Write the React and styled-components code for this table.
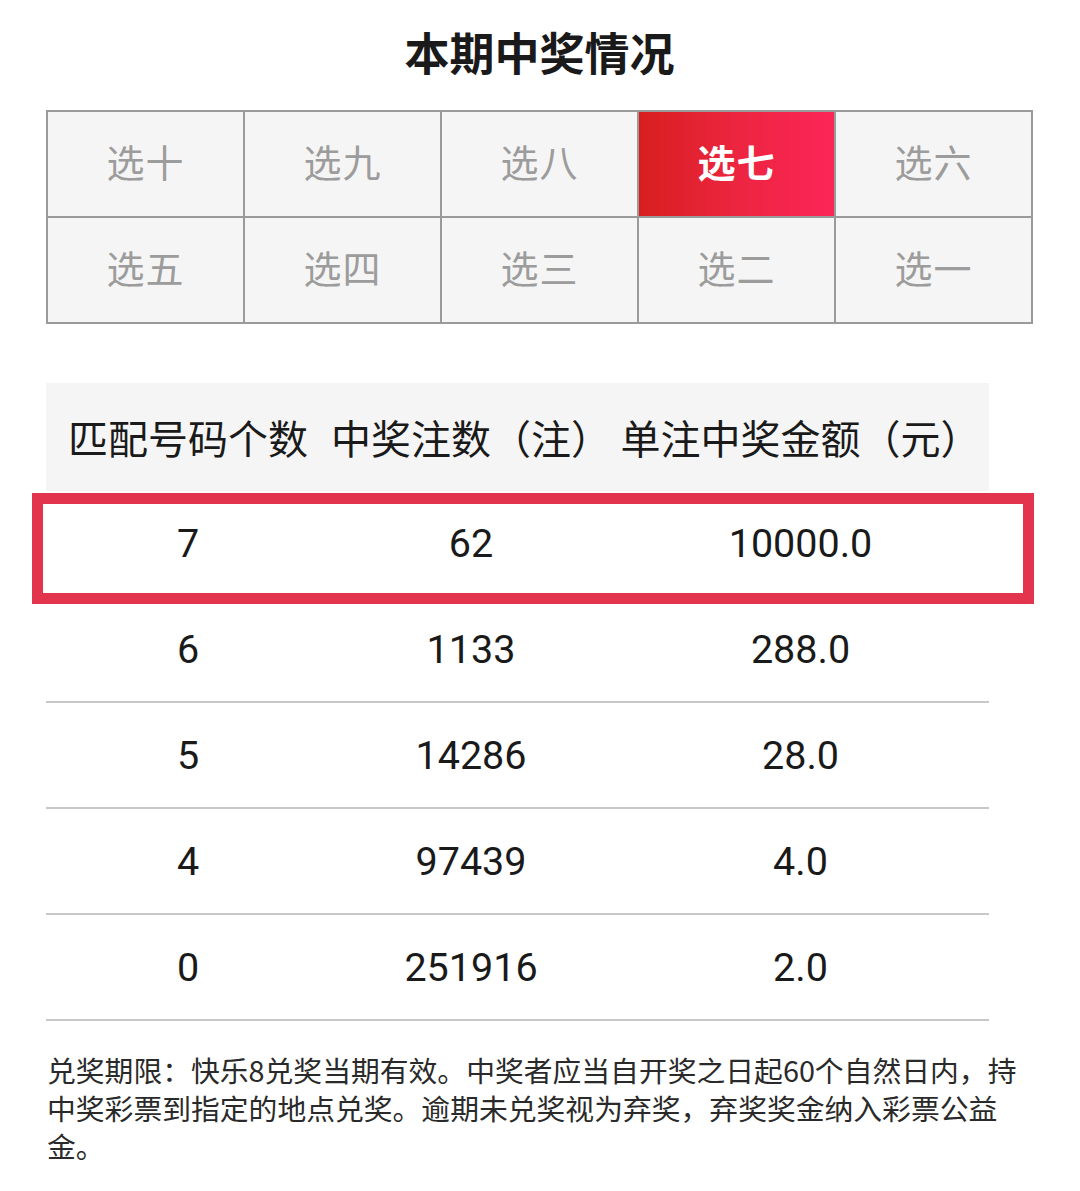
import React from "react";
import styled, { createGlobalStyle, css } from "styled-components";

const Global = createGlobalStyle`
  html, body { margin: 0; padding: 0; background: #ffffff; }
  body { font-family: "Noto Sans CJK SC", "Noto Sans", sans-serif; color: #1a1a1a; }
  * { box-sizing: border-box; }
`;

const Page = styled.div`
  width: 1080px;
  padding: 20px 0 40px 46px;
`;

const Title = styled.h1`
  margin: 0;
  width: 987px;
  text-align: center;
  font-size: 45px;
  line-height: 64px;
  font-weight: 700;
  color: #1a1a1a;
`;

const Tabs = styled.div`
  margin-top: 26px;
  width: 987px;
  display: grid;
  grid-template-columns: repeat(5, 1fr);
  grid-auto-rows: 106px;
  border-top: 2px solid #9a9a9a;
  border-left: 2px solid #9a9a9a;
`;

const Tab = styled.div`
  display: flex;
  align-items: center;
  justify-content: center;
  padding-bottom: 8px;
  border-right: 2px solid #9a9a9a;
  border-bottom: 2px solid #9a9a9a;
  background: #f5f5f5;
  color: #9c9c9c;
  font-size: 38px;
  letter-spacing: 1px;
  ${(p) =>
    p.$active &&
    css`
      background: linear-gradient(90deg, #d81f1f 0%, #ec2540 50%, #fc2558 100%);
      color: #ffffff;
      font-weight: 700;
    `}
`;

const Table = styled.div`
  margin-top: 59px;
  width: 943px;
`;

const Row = styled.div`
  position: relative;
  display: grid;
  grid-template-columns: 284px 282px 1fr;
  align-items: center;
  height: ${(p) => (p.$header ? "108px" : "106px")};
  background: ${(p) => (p.$header ? "#f5f5f5" : "#ffffff")};
  border-bottom: ${(p) => (p.$header ? "none" : "2px solid #c8c8c8")};
`;

const HeadCell = styled.div`
  text-align: center;
  font-size: 40px;
  color: #1a1a1a;
  white-space: nowrap;
`;

const Cell = styled.div`
  text-align: center;
  font-family: Roboto, "Noto Sans", sans-serif;
  font-size: 39.5px;
  color: #1a1a1a;
`;

const Highlight = styled.div`
  position: absolute;
  z-index: 2;
  top: 2px;
  left: -14px;
  right: -45px;
  bottom: -9px;
  border: 11px solid #e2344c;
  pointer-events: none;
`;

const Note = styled.p`
  margin: 30px 0 0 1px;
  width: 972px;
  font-size: 28.8px;
  line-height: 38px;
  color: #2a2a2a;
`;

const tabs = ["选十", "选九", "选八", "选七", "选六", "选五", "选四", "选三", "选二", "选一"];

const rows = [
  ["7", "62", "10000.0"],
  ["6", "1133", "288.0"],
  ["5", "14286", "28.0"],
  ["4", "97439", "4.0"],
  ["0", "251916", "2.0"],
];

export default function App() {
  return (
    <>
      <Global />
      <Page>
        <Title>本期中奖情况</Title>
        <Tabs>
          {tabs.map((t) => (
            <Tab key={t} $active={t === "选七"}>
              {t}
            </Tab>
          ))}
        </Tabs>
        <Table>
          <Row $header>
            <HeadCell>匹配号码个数</HeadCell>
            <HeadCell>中奖注数（注）</HeadCell>
            <HeadCell>单注中奖金额（元）</HeadCell>
          </Row>
          {rows.map((r, i) => (
            <Row key={i}>
              <Cell>{r[0]}</Cell>
              <Cell>{r[1]}</Cell>
              <Cell>{r[2]}</Cell>
              {i === 0 && <Highlight />}
            </Row>
          ))}
        </Table>
        <Note>
          兑奖期限：快乐8兑奖当期有效。中奖者应当自开奖之日起60个自然日内，持中奖彩票到指定的地点兑奖。逾期未兑奖视为弃奖，弃奖奖金纳入彩票公益金。
        </Note>
      </Page>
    </>
  );
}
